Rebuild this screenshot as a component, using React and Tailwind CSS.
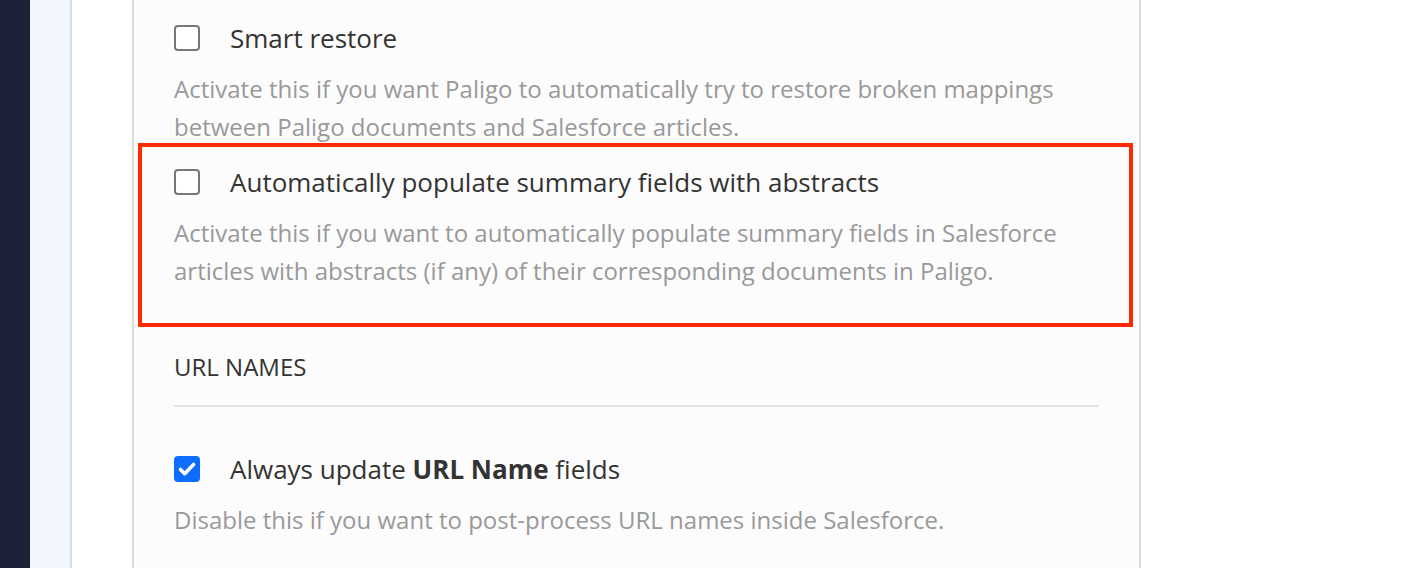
import React from "react"

function Box({ checked }) {
  if (checked) {
    return (
      <span className="flex h-[26px] w-[26px] shrink-0 items-center justify-center rounded-[4px] bg-[#0d6efd]">
        <svg width="20" height="20" viewBox="0 0 20 20" fill="none">
          <path d="M3.5 10.5l4.2 4.2L16.5 5.5" stroke="white" strokeWidth="3.6" strokeLinecap="round" strokeLinejoin="round" />
        </svg>
      </span>
    )
  }
  return <span className="block h-[26px] w-[26px] shrink-0 rounded-[4px] border-2 border-[#777] bg-white" />
}

function Option({ checked, label, desc }) {
  return (
    <div>
      <div className="flex h-[36px] items-center gap-[30px]">
        <Box checked={checked} />
        <span className="text-[26px] leading-[36px] text-[#333]">{label}</span>
      </div>
      <p className="mt-[14px] text-[24px] leading-[38px] text-[#999]">{desc}</p>
    </div>
  )
}

export default function App() {
  return (
    <div className="flex h-[568px] w-[1420px] overflow-hidden bg-white" style={{ fontFamily: '"Open Sans", "Noto Sans", sans-serif' }}>
      <div className="w-[30px] shrink-0 bg-[#1c2237]" />
      <div className="w-[40px] shrink-0 bg-[#f2f6fe]" />
      <div className="flex shrink-0 border-l-2 border-[#dcdcdc] bg-white pl-[60px]">
        <div className="w-[1009px] border-x-2 border-[#dcdcdc] bg-[#fcfcfc] pt-[20px]">
          <div className="pl-[40px] pr-[38px]">
            <Option
              label="Smart restore"
              desc="Activate this if you want Paligo to automatically try to restore broken mappings between Paligo documents and Salesforce articles."
            />
          </div>
          <div className="ml-[4px] mr-[6px] -mt-[3px] border-4 border-[#ff2a00] pb-[33px] pl-[32px] pr-[30px] pt-[17px]">
            <Option
              label="Automatically populate summary fields with abstracts"
              desc="Activate this if you want to automatically populate summary fields in Salesforce articles with abstracts (if any) of their corresponding documents in Paligo."
            />
          </div>
          <div className="pl-[40px] pr-[40px]">
            <h3 className="mt-[22px] text-[24px] leading-[36px] text-[#333]">URL NAMES</h3>
            <div className="mt-[20px] h-[2px] bg-[#e5e5e5]" />
            <div className="mt-[44px]">
              <Option
                checked
                label={<>Always update <b className="font-bold">URL Name</b> fields</>}
                desc="Disable this if you want to post-process URL names inside Salesforce."
              />
            </div>
          </div>
        </div>
      </div>
    </div>
  )
}
